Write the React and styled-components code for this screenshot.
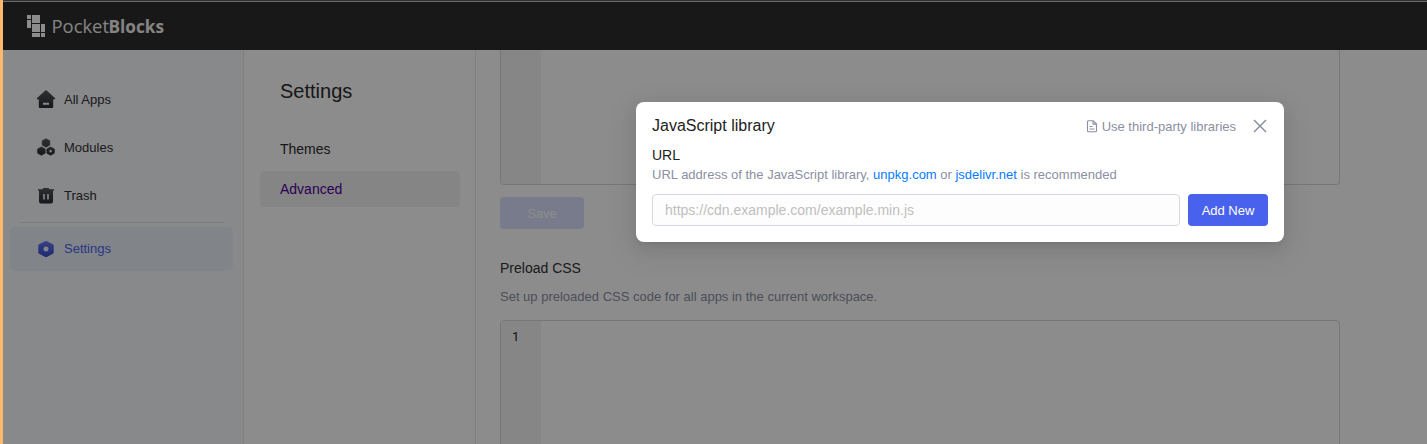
import React from "react";
import styled, { createGlobalStyle } from "styled-components";

const GlobalStyle = createGlobalStyle`
  * { box-sizing: border-box; }
  body {
    margin: 0;
    overflow: hidden;
    font-family: "Liberation Sans", Arial, sans-serif;
    font-size: 14px;
    color: #222;
  }
`;

const Window = styled.div`
  position: relative;
  height: 444px;
  padding-left: 3px;
  display: flex;
  flex-direction: column;
  overflow: hidden;
  background: #fff;
`;
const AccentEdge = styled.div`
  position: absolute;
  left: 0;
  top: 0;
  width: 3px;
  height: 100%;
  background: #ffb86c;
  z-index: 3;
`;
const TopLine = styled.div`
  position: absolute;
  left: 3px;
  right: 0;
  top: 0;
  height: 2px;
  background: #303030;
  border-bottom: 1px solid #6a6a6a;
  z-index: 3;
`;
const Header = styled.header`
  flex: none;
  height: 50px;
  padding: 2px 24px 0;
  display: flex;
  align-items: center;
  background: #2c2c2c;
`;
const Columns = styled.div`
  flex: 1;
  min-height: 0;
  display: flex;
`;
const Sidebar = styled.aside`
  flex: none;
  width: 241px;
  padding: 28px 10px 0 7px;
  background: #f7f9fc;
  border-right: 1px solid #ebebeb;
  display: flex;
  flex-direction: column;
  gap: 4px;
`;
const NavItem = styled.div`
  height: 44px;
  padding: 0 0 2px 26px;
  display: flex;
  align-items: center;
  gap: 8px;
  border-radius: 5px;
  font-size: 13px;
  color: ${(p) => (p.$active ? "#4965f2" : "#333")};
  background: ${(p) => (p.$active ? "#ebf0f7" : "transparent")};
  svg { flex: none; display: block; }
`;
const Divider = styled.div`
  height: 1px;
  margin: 0 9px 0 10px;
  background: #e1e3eb;
`;
const SettingsNav = styled.nav`
  flex: none;
  width: 232px;
  padding: 26px 15px 0 16px;
  border-right: 1px solid #ebebeb;
  display: flex;
  flex-direction: column;
  gap: 4px;
`;
const SettingsTitle = styled.h1`
  margin: 0 0 25px;
  padding-left: 20px;
  font-size: 20px;
  font-weight: 400;
  line-height: 30px;
  height: 26px;
  color: #2c2c2c;
`;
const SettingsLink = styled.div`
  height: 36px;
  padding-left: 20px;
  line-height: 36px;
  border-radius: 4px;
  color: ${(p) => (p.$active ? "#51009a" : "#2c2c2c")};
  background: ${(p) => (p.$active ? "#f2f2f2" : "transparent")};
`;
const Content = styled.main`
  flex: 1;
  min-width: 0;
  padding-left: 24px;
  overflow: hidden;
`;
const Editor = styled.div`
  width: 840px;
  height: ${(p) => p.$height}px;
  display: flex;
  overflow: hidden;
  border: 1px solid #d7d9e0;
  border-top-width: ${(p) => (p.$cut ? 0 : 1)}px;
  border-radius: ${(p) => (p.$cut ? "0 0 4px 4px" : "4px 4px 0 0")};
`;
const Gutter = styled.div`
  width: 40px;
  padding: 7px 0 0 11px;
  background: #f5f5f5;
  font: 13px/18px Roboto, sans-serif;
`;
const SaveButton = styled.button`
  display: block;
  width: 84px;
  height: 32px;
  margin: 12px 0 0;
  padding: 0;
  border: 0;
  border-radius: 4px;
  background: #dbe1fd;
  color: #fff;
  font: 13px "Liberation Sans", Arial, sans-serif;
`;
const SectionTitle = styled.h2`
  margin: 29px 0 0;
  font-size: 14px;
  line-height: 20px;
  font-weight: 400;
  color: #333;
`;
const SectionHint = styled.p`
  margin: 9px 0 13px;
  font-size: 13px;
  line-height: 20px;
  color: #8b8fa3;
`;
const Mask = styled.div`
  position: absolute;
  inset: 0;
  background: rgba(0, 0, 0, 0.45);
  z-index: 1;
`;
const Dialog = styled.section`
  position: absolute;
  left: 636px;
  top: 102px;
  width: 648px;
  height: 140px;
  padding: 12px 16px 16px;
  border-radius: 8px;
  background: #fff;
  box-shadow: 0 3px 6px -4px rgba(0, 0, 0, 0.12), 0 6px 16px rgba(0, 0, 0, 0.08),
    0 9px 28px 8px rgba(0, 0, 0, 0.05);
  z-index: 2;
`;
const DialogHeader = styled.div`
  height: 24px;
  display: flex;
  align-items: center;
`;
const DialogTitle = styled.div`
  flex: 1;
  font-size: 16px;
`;
const DocLink = styled.span`
  display: flex;
  align-items: center;
  gap: 4px;
  margin-right: 16px;
  padding-top: 1px;
  font-size: 13px;
  color: #8b8fa3;
`;
const FieldLabel = styled.div`
  margin-top: 7px;
  line-height: 20px;
`;
const FieldHint = styled.div`
  font-size: 13px;
  line-height: 19px;
  color: #8b8fa3;
`;
const Anchor = styled.a`
  color: #077bff;
`;
const FormRow = styled.div`
  margin-top: 10px;
  display: flex;
  gap: 8px;
`;
const UrlInput = styled.input`
  flex: 1;
  min-width: 0;
  height: 32px;
  padding: 0 12px;
  border: 1px solid #d7d9e0;
  border-radius: 4px;
  background: #fdfdfd;
  font: 14px "Liberation Sans", Arial, sans-serif;
  &::placeholder { color: #bfbfbf; opacity: 1; }
`;
const AddButton = styled.button`
  width: 80px;
  height: 32px;
  padding: 0;
  border: 0;
  border-radius: 4px;
  background: #4962ee;
  color: #fff;
  font: 13px "Liberation Sans", Arial, sans-serif;
`;

const Logo = () => (
  <svg width="140" height="28" viewBox="0 0 140 28" fill="#fff">
    <path d="M0 3h4v4H0zM5 3h8v8H5zM0 8h4v8H0zM5 12h8v8H5zM14 12h4v8h-4zM5 21h8v4H5zM14 21h4v4h-4z" />
    <g fill="#f0f0f0" fontFamily="Open Sans, sans-serif" fontSize="18">
      <text x="24.500" y="21" fontWeight="400" textLength="57.500" lengthAdjust="spacingAndGlyphs">Pocket</text>
      <text x="81.500" y="21" fontWeight="700" textLength="55.500" lengthAdjust="spacingAndGlyphs">Blocks</text>
    </g>
  </svg>
);

const Shade = ({ id, from, to }) => (
  <linearGradient id={id} x1="0" y1="0" x2="0" y2="1">
    <stop stopColor={from} />
    <stop offset="1" stopColor={to} />
  </linearGradient>
);
const HomeIcon = () => (
  <svg width="20" height="20" viewBox="0 0 20 20">
    <defs><Shade id="home" from="#54565c" to="#2c2d33" /></defs>
    <path fill="url(#home)" fillRule="evenodd" d="M9.3 1.500a1 1 0 0 1 1.4 0l8.200 7.400c.6.6.3 1.300-.5 1.300H17.200v7.800a1 1 0 0 1-1 1H3.800a1 1 0 0 1-1-1v-7.800H1.600c-.8 0-1.1-.7-.5-1.300zM7 13.800v2h6v-2z" />
  </svg>
);
const ModulesIcon = () => (
  <svg width="20" height="20" viewBox="0 0 20 20">
    <defs><Shade id="modules" from="#54565c" to="#2c2d33" /></defs>
    <path
      fill="url(#modules)"
      stroke="url(#modules)"
      strokeWidth=".6"
      strokeLinejoin="round"
      fillRule="evenodd"
      d="M10 1.700l3.800 2v4.400L10 10.200l-3.800-2.100V3.700zM5.400 9.900l3.800 2.100v4.200l-3.800 2.100-3.800-2.100V12zM14.600 9.900l3.800 2.100v4.200l-3.800 2.100-3.800-2.100V12zM14.600 12.500a1.600 1.600 0 1 0 0 3.200 1.600 1.600 0 0 0 0-3.200z"
    />
  </svg>
);
const TrashIcon = () => (
  <svg width="20" height="20" viewBox="0 -1 20 20">
    <defs><Shade id="trash" from="#54565c" to="#2c2d33" /></defs>
    <path fill="url(#trash)" fillRule="evenodd" d="M7.300 2h5.400l.8 1.200H18v1.600h-1V15.600a2 2 0 0 1-2 2H5a2 2 0 0 1-2-2V4.800H2V3.200h4.500zM7.200 8v5.600h1.600V8zM11.200 8v5.600h1.600V8z" />
  </svg>
);
const SettingsIcon = () => (
  <svg width="20" height="20" viewBox="0 -1 20 20">
    <defs><Shade id="settings" from="#6479ef" to="#354bd0" /></defs>
    <path fill="url(#settings)" fillRule="evenodd" d="M9.200 2.200q.8-.4 1.600 0l6.100 3.100q.8.400.8 1.300v6.800q0 .9-.8 1.300l-6.100 3.200q-.8.400-1.600 0l-6.100-3.200q-.8-.4-.8-1.300V6.600q0-.9.8-1.300zM10 7.500a2.500 2.500 0 1 0 0 5 2.500 2.500 0 0 0 0-5z" />
  </svg>
);
const DocIcon = () => (
  <svg width="12" height="14" viewBox="0 0.700 12 14" fill="none" stroke="#8b8fa3" strokeWidth="1.100" strokeLinejoin="round">
    <path d="M2.500 1.500h4.800l3.200 3.200v6.800a1 1 0 0 1-1 1h-7a1 1 0 0 1-1-1v-9a1 1 0 0 1 1-1zM7 1.500v3.300h3.500M3.500 7.200h3M3.500 9.700h5" />
  </svg>
);
const CloseIcon = () => (
  <svg width="16" height="16" viewBox="0 0 16 16" fill="none" stroke="#8b8fa3" strokeWidth="1.500">
    <path d="M2 2l12 12M14 2L2 14" />
  </svg>
);

export default function App() {
  return (
    <Window>
      <GlobalStyle />
      <AccentEdge />
      <TopLine />
      <Header><Logo /></Header>
      <Columns>
        <Sidebar>
          <NavItem><HomeIcon />All Apps</NavItem>
          <NavItem><ModulesIcon />Modules</NavItem>
          <NavItem><TrashIcon />Trash</NavItem>
          <Divider />
          <NavItem $active><SettingsIcon />Settings</NavItem>
        </Sidebar>
        <SettingsNav>
          <SettingsTitle>Settings</SettingsTitle>
          <SettingsLink>Themes</SettingsLink>
          <SettingsLink $active>Advanced</SettingsLink>
        </SettingsNav>
        <Content>
          <Editor $height={135} $cut><Gutter /></Editor>
          <SaveButton>Save</SaveButton>
          <SectionTitle>Preload CSS</SectionTitle>
          <SectionHint>Set up preloaded CSS code for all apps in the current workspace.</SectionHint>
          <Editor $height={140}><Gutter>1</Gutter></Editor>
        </Content>
      </Columns>
      <Mask />
      <Dialog>
        <DialogHeader>
          <DialogTitle>JavaScript library</DialogTitle>
          <DocLink><DocIcon />Use third-party libraries</DocLink>
          <CloseIcon />
        </DialogHeader>
        <FieldLabel>URL</FieldLabel>
        <FieldHint>
          URL address of the JavaScript library, <Anchor>unpkg.com</Anchor> or <Anchor>jsdelivr.net</Anchor> is recommended
        </FieldHint>
        <FormRow>
          <UrlInput placeholder="https://cdn.example.com/example.min.js" />
          <AddButton>Add New</AddButton>
        </FormRow>
      </Dialog>
    </Window>
  );
}
